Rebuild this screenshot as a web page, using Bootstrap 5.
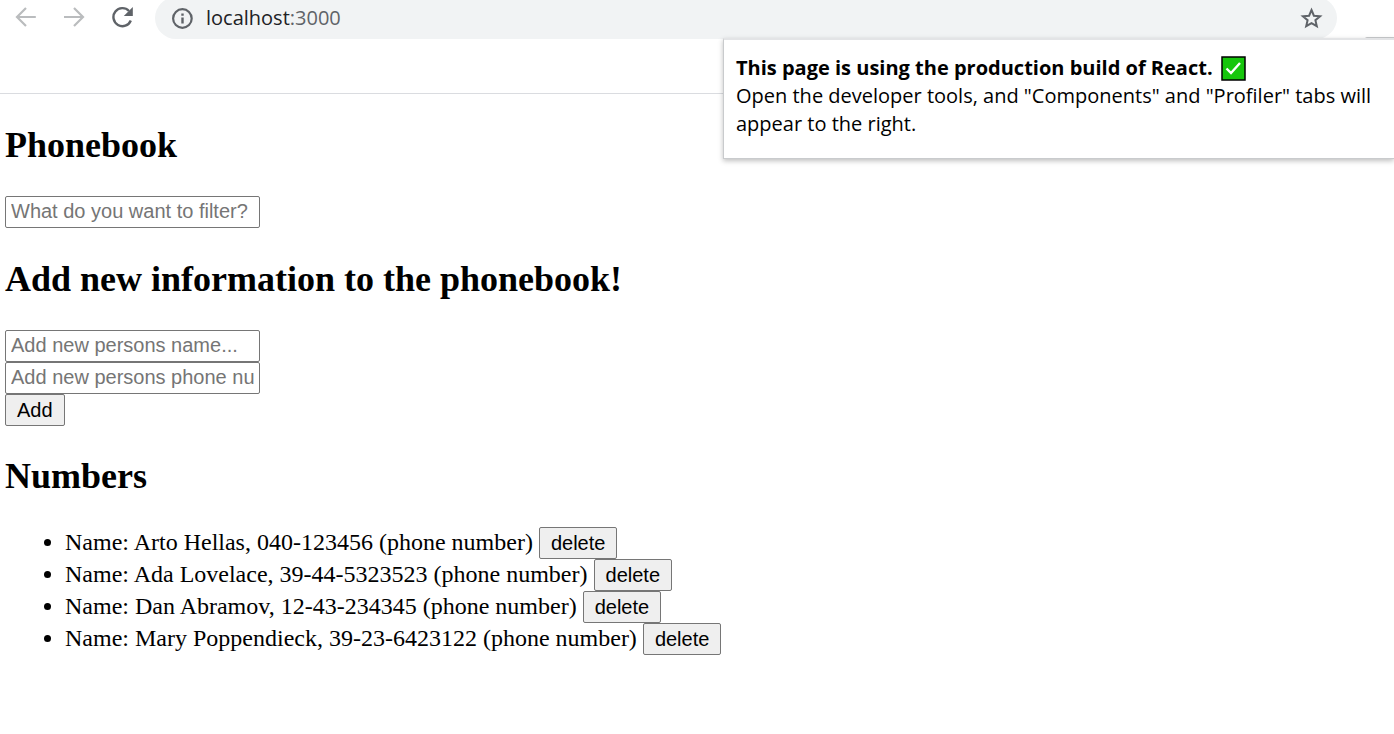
<!DOCTYPE html>
<html lang="en">
<head>
<meta charset="utf-8">
<meta name="viewport" content="width=device-width, initial-scale=1">
<title>Phonebook</title>
<link href="https://cdn.jsdelivr.net/npm/bootstrap@5.3.0/dist/css/bootstrap.min.css" rel="stylesheet">
<style>
  body { background: #fff; color: #000; font-family: "Liberation Serif", serif; font-size: 24px; line-height: 32px; }
  .browser-bar { height: 94px; border-bottom: 1px solid #dadce0; font-family: "Open Sans", sans-serif; }
  .toolbar { height: 39px; }
  .nav-icons { width: 155px; height: 42px; padding-left: 14px; gap: 24px; }
  .icon-btn { width: 24px; height: 24px; line-height: 0; color: #5f6368; }
  .icon-btn:disabled { color: #babcbe; opacity: 1; }
  .address { height: 42px; background: #f1f3f4; border-radius: 21px; padding: 0 13px 0 15px; }
  .address a { font-size: 20px; line-height: 28px; color: #202124; }
  .address a span { color: #5f6368; }
  .avatar-edge { width: 29px; height: 2px; margin-left: 28px; background: #c9cbcd; border-top-left-radius: 4px; }
  .devtools-note { top: 38px; right: 0; width: 671px; height: 121px; background: #fff; border: 1px solid #c9cbcd; border-top: 2px solid #e3e4e6; border-right: 0; box-shadow: 0 2px 5px rgba(0,0,0,.25); padding: 14px 12px; font-size: 20px; line-height: 28px; }
  h2 { font-size: 36px; line-height: 41px; font-weight: 700; margin: 0 0 30px; }
  main { padding: 31px 5px; }
  .field, .push { font-family: "Liberation Sans", sans-serif; font-size: 20px; line-height: 24px; height: 32px; border: 1px solid #767676; border-radius: 2px; color: #000; }
  .field { width: 255px; padding: 2px 5px 4px; background: #fff; }
  .field::placeholder { color: #757575; opacity: 1; }
  .push { background: #efefef; padding: 2px 11px; }
  .filter-row { margin-bottom: 31px; }
  .person-form { margin-bottom: 30px; }
  .people { padding-left: 60px; }
  .people li { height: 32px; line-height: 30px; }
</style>
</head>
<body>
<header class="browser-bar position-relative">
  <div class="toolbar d-flex align-items-end overflow-hidden">
    <nav class="nav-icons d-flex flex-shrink-0 align-items-center pb-1" aria-label="Browser">
      <button class="icon-btn btn border-0 p-0" disabled aria-label="Back"><svg width="24" height="24" fill="none" stroke="currentColor" stroke-width="2.200"><path d="M21.800 13H3.500M12 4l-9 9 9 9"/></svg></button>
      <button class="icon-btn btn border-0 p-0" disabled aria-label="Forward"><svg width="24" height="24" fill="none" stroke="currentColor" stroke-width="2.200"><path d="M2 13h18.500M12 4l9 9-9 9"/></svg></button>
      <button class="icon-btn btn border-0 p-0" aria-label="Reload"><svg width="24" height="24"><path d="M20.800 16.500A9 9 0 1 1 19 7" fill="none" stroke="currentColor" stroke-width="2.400"/><path d="M22.800 3v9h-9z" fill="currentColor"/></svg></button>
    </nav>
    <div class="address d-flex align-items-center flex-grow-1">
      <svg width="24" height="24" fill="none" stroke="#5f6368" stroke-width="2.200"><circle cx="12.400" cy="12.500" r="9.300"/><path d="M12.500 11.500v6M12.500 7.500v2.300" stroke-width="2.400"/></svg>
      <a class="text-decoration-none ms-2 ps-1 me-auto" href="#">localhost<span>:3000</span></a>
      <button class="icon-btn btn border-0 p-0" aria-label="Bookmark this page"><svg width="24" height="24" fill="none" stroke="currentColor" stroke-width="2"><path d="M11.500 4l2.400 5.700 6.200.5-4.700 4 1.400 6-5.300-3.100-5.300 3.100 1.400-6-4.700-4 6.200-.5z"/></svg></button>
    </div>
    <div class="avatar-edge"></div>
  </div>
  <aside class="devtools-note position-absolute">
    <div class="d-flex align-items-center"><b>This page is using the production build of React.</b>
      <svg class="ms-2" width="25" height="25" role="img" aria-label="Check mark"><path d="M1 1h23v23H1z" fill="#16c60c" stroke="#000" stroke-width="1.500"/><path d="M5.500 12.500l4.500 4.500 9-10" fill="none" stroke="#fff" stroke-width="2.400"/></svg></div>
    <div>Open the developer tools, and "Components" and "Profiler" tabs will appear to the right.</div>
  </aside>
</header>
<main>
  <h2>Phonebook</h2>
  <div class="filter-row d-flex"><input class="field" type="text" placeholder="What do you want to filter?" aria-label="Filter"></div>
  <h2>Add new information to the phonebook!</h2>
  <form class="person-form d-flex flex-column align-items-start">
    <input class="field" type="text" placeholder="Add new persons name..." aria-label="Name">
    <input class="field" type="text" placeholder="Add new persons phone number..." aria-label="Phone number">
    <button class="push" type="button">Add</button>
  </form>
  <h2>Numbers</h2>
  <ul class="people mb-0">
    <li>Name: Arto Hellas, 040-123456 (phone number) <button class="push align-top" type="button">delete</button></li>
    <li>Name: Ada Lovelace, 39-44-5323523 (phone number) <button class="push align-top" type="button">delete</button></li>
    <li>Name: Dan Abramov, 12-43-234345 (phone number) <button class="push align-top" type="button">delete</button></li>
    <li>Name: Mary Poppendieck, 39-23-6423122 (phone number) <button class="push align-top" type="button">delete</button></li>
  </ul>
</main>
<script src="https://cdn.jsdelivr.net/npm/bootstrap@5.3.0/dist/js/bootstrap.bundle.min.js"></script>
</body>
</html>
